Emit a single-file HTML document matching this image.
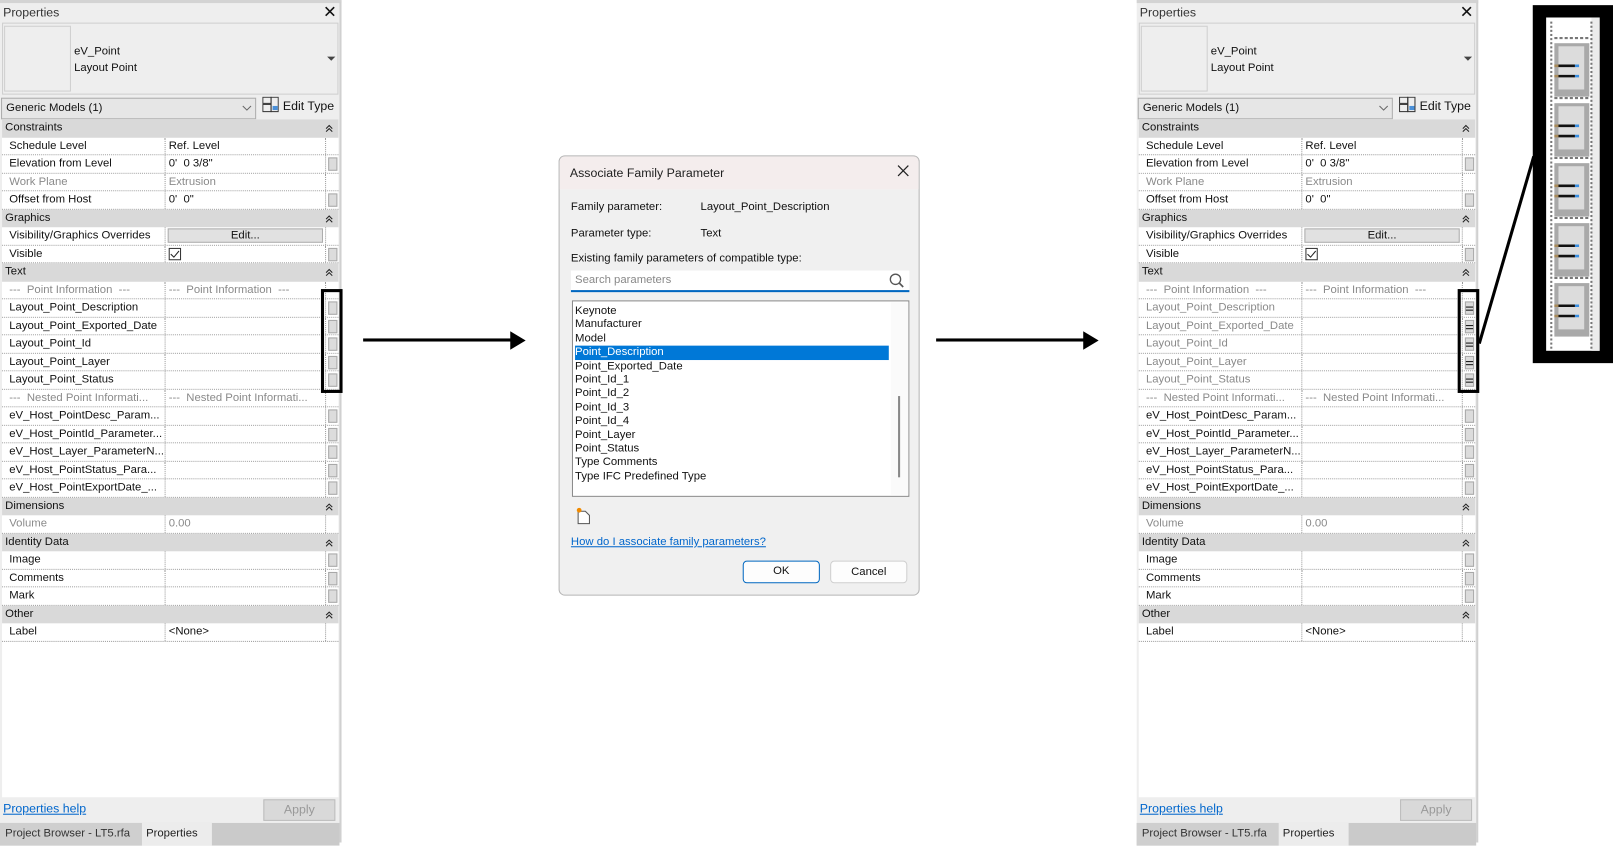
<!DOCTYPE html>
<html><head><meta charset="utf-8">
<style>
*{box-sizing:border-box}
body{margin:0;width:1613px;height:842px;overflow:hidden;background:#fff;font-family:"Liberation Sans",sans-serif;font-size:11px;color:#111}
#w{position:absolute;left:0;top:0;width:1568px;height:819px;transform:scale(1.0287);transform-origin:0 0}
.abs{position:absolute}
.panel{position:absolute;top:0;width:332px;height:819px;background:#eeeeee;border-top:3px solid #d3d3d3;border-right:2px solid #d0d0d0}
.tbl{position:absolute;left:2px;top:113px;width:327px;height:659px;background:#fff}
.r{height:17.5px;position:relative;border-bottom:1px dotted #9a9a9a;background:#fff;line-height:16px}
.n{position:absolute;left:7px;top:0;width:150px;overflow:hidden;white-space:nowrap}
.v{position:absolute;left:158px;top:0;bottom:0;width:156px;border-left:1px dotted #9a9a9a;padding-left:3px;white-space:nowrap;overflow:hidden}
.b{position:absolute;left:314px;top:0;bottom:0;width:13px;border-left:1px dotted #9a9a9a}
.b i{position:absolute;left:2px;top:2px;width:9px;height:13px;background:#dcdcdc;border:1px solid #a8a8a8}
.b i.e::before,.b i.e::after{content:"";position:absolute;left:0;width:7px;height:1px;background:#111}
.b i.e::before{top:4px}.b i.e::after{top:7px}
.h{height:17.5px;background:#d9d9d9;padding-left:3px;line-height:17px;position:relative}
.h svg{position:absolute;right:5px;top:5px}
.g{color:#8a8a8a}
</style></head><body><div id="w">

<!-- LEFT PANEL -->
<div class="panel" style="left:0">
 <div class="abs" style="left:3px;top:2px;color:#333;font-size:12px">Properties</div>
 <div class="abs" style="left:314px;top:-1px;font-size:16px">✕</div>
 <div class="abs" style="left:2px;top:19px;width:327px;height:70px;border:1px solid #cfcfcf;background:#eeeeee"></div>
 <div class="abs" style="left:4px;top:22px;width:65px;height:64px;border:1px solid #cfcfcf;background:#eeeeee"></div>
 <div class="abs" style="left:72px;top:39px;line-height:16px">eV_Point<br>Layout Point</div>
 <div class="abs" style="left:318px;top:52px;width:0;height:0;border-left:4px solid transparent;border-right:4px solid transparent;border-top:4px solid #444"></div>
 <div class="abs" style="left:1px;top:92px;width:248px;height:21px;border:1px solid #adadad;background:#e6e6e6;padding:3px 4px">Generic Models (1)</div>
 <svg class="abs" style="left:235px;top:99px" width="10" height="7"><path d="M1 1 L5 5 L9 1" stroke="#666" fill="none"/></svg>
 <svg class="abs" style="left:255px;top:91px" width="16" height="16"><rect x="0.5" y="0.5" width="8" height="6" fill="none" stroke="#333"/><rect x="0.5" y="7.5" width="8" height="7" fill="none" stroke="#333"/><rect x="8.5" y="0.5" width="7" height="14" fill="none" stroke="#333"/><rect x="10" y="9" width="5" height="4" fill="#4a90d9"/></svg>
 <div class="abs" style="left:275px;top:93px;font-size:12px">Edit Type</div>
 <div class="tbl">
  <div class="h">Constraints<svg width="8" height="8"><path d="M1 4L4 1L7 4M1 7L4 4L7 7" stroke="#222" fill="none"/></svg></div>
  <div class="r"><span class="n">Schedule Level</span><span class="v">Ref. Level</span><span class="b"></span></div>
  <div class="r"><span class="n">Elevation from Level</span><span class="v">0'&nbsp; 0 3/8"</span><span class="b"><i></i></span></div>
  <div class="r"><span class="n g">Work Plane</span><span class="v g">Extrusion</span><span class="b"></span></div>
  <div class="r"><span class="n">Offset from Host</span><span class="v">0'&nbsp; 0"</span><span class="b"><i></i></span></div>
  <div class="h">Graphics<svg width="8" height="8"><path d="M1 4L4 1L7 4M1 7L4 4L7 7" stroke="#222" fill="none"/></svg></div>
  <div class="r"><span class="n">Visibility/Graphics Overrides</span><span class="v" style="padding:1px 2px"><span style="display:block;height:14px;background:#e1e1e1;border:1px solid #adadad;text-align:center;line-height:12px">Edit...</span></span><span class="b"></span></div>
  <div class="r"><span class="n">Visible</span><span class="v"><span style="display:inline-block;width:12px;height:12px;border:1px solid #333;margin-top:2px;position:relative"><svg style="position:absolute;left:0;top:0" width="10" height="10"><path d="M1 5L4 8L9 2" stroke="#222" fill="none"/></svg></span></span><span class="b"><i></i></span></div>
  <div class="h">Text<svg width="8" height="8"><path d="M1 4L4 1L7 4M1 7L4 4L7 7" stroke="#222" fill="none"/></svg></div>
  <div class="r"><span class="n g">---&nbsp; Point Information&nbsp; ---</span><span class="v g">---&nbsp; Point Information&nbsp; ---</span><span class="b"></span></div>
  <div class="r"><span class="n">Layout_Point_Description</span><span class="v"></span><span class="b"><i></i></span></div>
  <div class="r"><span class="n">Layout_Point_Exported_Date</span><span class="v"></span><span class="b"><i></i></span></div>
  <div class="r"><span class="n">Layout_Point_Id</span><span class="v"></span><span class="b"><i></i></span></div>
  <div class="r"><span class="n">Layout_Point_Layer</span><span class="v"></span><span class="b"><i></i></span></div>
  <div class="r"><span class="n">Layout_Point_Status</span><span class="v"></span><span class="b"><i></i></span></div>
  <div class="r"><span class="n g">---&nbsp; Nested Point Informati...</span><span class="v g">---&nbsp; Nested Point Informati...</span><span class="b"></span></div>
  <div class="r"><span class="n">eV_Host_PointDesc_Param...</span><span class="v"></span><span class="b"><i></i></span></div>
  <div class="r"><span class="n">eV_Host_PointId_Parameter...</span><span class="v"></span><span class="b"><i></i></span></div>
  <div class="r"><span class="n">eV_Host_Layer_ParameterN...</span><span class="v"></span><span class="b"><i></i></span></div>
  <div class="r"><span class="n">eV_Host_PointStatus_Para...</span><span class="v"></span><span class="b"><i></i></span></div>
  <div class="r"><span class="n">eV_Host_PointExportDate_...</span><span class="v"></span><span class="b"><i></i></span></div>
  <div class="h">Dimensions<svg width="8" height="8"><path d="M1 4L4 1L7 4M1 7L4 4L7 7" stroke="#222" fill="none"/></svg></div>
  <div class="r"><span class="n g">Volume</span><span class="v g">0.00</span><span class="b"></span></div>
  <div class="h">Identity Data<svg width="8" height="8"><path d="M1 4L4 1L7 4M1 7L4 4L7 7" stroke="#222" fill="none"/></svg></div>
  <div class="r"><span class="n">Image</span><span class="v"></span><span class="b"><i></i></span></div>
  <div class="r"><span class="n">Comments</span><span class="v"></span><span class="b"><i></i></span></div>
  <div class="r"><span class="n">Mark</span><span class="v"></span><span class="b"><i></i></span></div>
  <div class="h">Other<svg width="8" height="8"><path d="M1 4L4 1L7 4M1 7L4 4L7 7" stroke="#222" fill="none"/></svg></div>
  <div class="r"><span class="n">Label</span><span class="v">&lt;None&gt;</span><span class="b"></span></div>
 </div>
 <div class="abs" style="left:3px;top:776px;color:#0066cc;text-decoration:underline;font-size:12px">Properties help</div>
 <div class="abs" style="left:256px;top:774px;width:70px;height:21px;background:#d9d9d9;border:1px solid #bcbcbc;color:#999;text-align:center;line-height:19px;font-size:12px">Apply</div>
 <div class="abs" style="left:0;top:797px;width:330px;height:22px;background:#cacaca"></div>
 <div class="abs" style="left:0;top:797px;width:138px;height:22px;background:#cfcfcf;padding:4px 5px;color:#333">Project Browser - LT5.rfa</div>
 <div class="abs" style="left:138px;top:797px;width:68px;height:22px;background:#ececec;padding:4px 4px;color:#222">Properties</div>
</div>
<div class="abs" style="left:312px;top:281px;width:21px;height:101px;border:3px solid #000"></div>

<!-- ARROWS -->
<div class="abs" style="left:353px;top:329px;width:146px;height:3px;background:#000"></div>
<div class="abs" style="left:496px;top:322px;width:0;height:0;border-top:9px solid transparent;border-bottom:9px solid transparent;border-left:15px solid #000"></div>
<div class="abs" style="left:910px;top:329px;width:146px;height:3px;background:#000"></div>
<div class="abs" style="left:1053px;top:322px;width:0;height:0;border-top:9px solid transparent;border-bottom:9px solid transparent;border-left:15px solid #000"></div>

<!-- DIALOG -->
<div class="abs" style="left:543px;top:151px;width:351px;height:428px;border:1px solid #b5b5b5;border-radius:6px;background:#f0f0f0;overflow:hidden">
 <div class="abs" style="left:0;top:0;width:351px;height:32px;background:#f4eded"></div>
 <div class="abs" style="left:10px;top:9px;font-size:12px;color:#222">Associate Family Parameter</div>
 <svg class="abs" style="left:328px;top:8px" width="12" height="12"><path d="M1 1L11 11M11 1L1 11" stroke="#222" stroke-width="1.2"/></svg>
 <div class="abs" style="left:11px;top:43px;font-size:11px">Family parameter:</div>
 <div class="abs" style="left:137px;top:43px;font-size:11px">Layout_Point_Description</div>
 <div class="abs" style="left:11px;top:69px;font-size:11px">Parameter type:</div>
 <div class="abs" style="left:137px;top:69px;font-size:11px">Text</div>
 <div class="abs" style="left:11px;top:93px;font-size:11px">Existing family parameters of compatible type:</div>
 <div class="abs" style="left:11px;top:111px;width:329px;height:21px;background:#fff;border-bottom:2px solid #0067c0;color:#888;padding:3px 4px;font-size:11px">Search parameters</div>
 <svg class="abs" style="left:320px;top:113px" width="16" height="16"><circle cx="6.5" cy="6.5" r="5" stroke="#555" fill="none" stroke-width="1.3"/><path d="M10 10L14 14" stroke="#555" stroke-width="1.6"/></svg>
 <div class="abs" style="left:12px;top:140px;width:328px;height:191px;background:#fff;border:1px solid #8a8a8a;font-size:11px;line-height:13.4px;padding:3px 2px">
  <div>Keynote</div><div>Manufacturer</div><div>Model</div>
  <div style="background:#0078d7;color:#fff;width:305px">Point_Description</div>
  <div>Point_Exported_Date</div><div>Point_Id_1</div><div>Point_Id_2</div><div>Point_Id_3</div><div>Point_Id_4</div><div>Point_Layer</div><div>Point_Status</div><div>Type Comments</div><div>Type IFC Predefined Type</div>
  <div class="abs" style="left:309px;top:1px;width:17px;height:187px;background:#fafafa"></div>
  <div class="abs" style="left:316px;top:92px;width:2px;height:79px;background:#888"></div>
 </div>
 <svg class="abs" style="left:15px;top:341px" width="16" height="18"><path d="M3 4H10L14 8V16H3Z" fill="#fff" stroke="#555"/><circle cx="4" cy="3" r="2.3" fill="#f08a00"/></svg>
 <div class="abs" style="left:11px;top:369px;color:#0066cc;text-decoration:underline;font-size:11px">How do I associate family parameters?</div>
 <div class="abs" style="left:178px;top:393px;width:75px;height:22px;border:1.5px solid #0067c0;border-radius:4px;background:#fdfdfd;text-align:center;line-height:19px;font-size:11px">OK</div>
 <div class="abs" style="left:263px;top:393px;width:75px;height:22px;border:1px solid #cfcfcf;border-radius:4px;background:#fdfdfd;text-align:center;line-height:20px;font-size:11px">Cancel</div>
</div>

<!-- RIGHT PANEL -->
<div class="panel" style="left:1105px">
 <div class="abs" style="left:3px;top:2px;color:#333;font-size:12px">Properties</div>
 <div class="abs" style="left:314px;top:-1px;font-size:16px">✕</div>
 <div class="abs" style="left:2px;top:19px;width:327px;height:70px;border:1px solid #cfcfcf;background:#eeeeee"></div>
 <div class="abs" style="left:4px;top:22px;width:65px;height:64px;border:1px solid #cfcfcf;background:#eeeeee"></div>
 <div class="abs" style="left:72px;top:39px;line-height:16px">eV_Point<br>Layout Point</div>
 <div class="abs" style="left:318px;top:52px;width:0;height:0;border-left:4px solid transparent;border-right:4px solid transparent;border-top:4px solid #444"></div>
 <div class="abs" style="left:1px;top:92px;width:248px;height:21px;border:1px solid #adadad;background:#e6e6e6;padding:3px 4px">Generic Models (1)</div>
 <svg class="abs" style="left:235px;top:99px" width="10" height="7"><path d="M1 1 L5 5 L9 1" stroke="#666" fill="none"/></svg>
 <svg class="abs" style="left:255px;top:91px" width="16" height="16"><rect x="0.5" y="0.5" width="8" height="6" fill="none" stroke="#333"/><rect x="0.5" y="7.5" width="8" height="7" fill="none" stroke="#333"/><rect x="8.5" y="0.5" width="7" height="14" fill="none" stroke="#333"/><rect x="10" y="9" width="5" height="4" fill="#4a90d9"/></svg>
 <div class="abs" style="left:275px;top:93px;font-size:12px">Edit Type</div>
 <div class="tbl">
  <div class="h">Constraints<svg width="8" height="8"><path d="M1 4L4 1L7 4M1 7L4 4L7 7" stroke="#222" fill="none"/></svg></div>
  <div class="r"><span class="n">Schedule Level</span><span class="v">Ref. Level</span><span class="b"></span></div>
  <div class="r"><span class="n">Elevation from Level</span><span class="v">0'&nbsp; 0 3/8"</span><span class="b"><i></i></span></div>
  <div class="r"><span class="n g">Work Plane</span><span class="v g">Extrusion</span><span class="b"></span></div>
  <div class="r"><span class="n">Offset from Host</span><span class="v">0'&nbsp; 0"</span><span class="b"><i></i></span></div>
  <div class="h">Graphics<svg width="8" height="8"><path d="M1 4L4 1L7 4M1 7L4 4L7 7" stroke="#222" fill="none"/></svg></div>
  <div class="r"><span class="n">Visibility/Graphics Overrides</span><span class="v" style="padding:1px 2px"><span style="display:block;height:14px;background:#e1e1e1;border:1px solid #adadad;text-align:center;line-height:12px">Edit...</span></span><span class="b"></span></div>
  <div class="r"><span class="n">Visible</span><span class="v"><span style="display:inline-block;width:12px;height:12px;border:1px solid #333;margin-top:2px;position:relative"><svg style="position:absolute;left:0;top:0" width="10" height="10"><path d="M1 5L4 8L9 2" stroke="#222" fill="none"/></svg></span></span><span class="b"><i></i></span></div>
  <div class="h">Text<svg width="8" height="8"><path d="M1 4L4 1L7 4M1 7L4 4L7 7" stroke="#222" fill="none"/></svg></div>
  <div class="r"><span class="n g">---&nbsp; Point Information&nbsp; ---</span><span class="v g">---&nbsp; Point Information&nbsp; ---</span><span class="b"></span></div>
  <div class="r"><span class="n g">Layout_Point_Description</span><span class="v"></span><span class="b"><i class="e"></i></span></div>
  <div class="r"><span class="n g">Layout_Point_Exported_Date</span><span class="v"></span><span class="b"><i class="e"></i></span></div>
  <div class="r"><span class="n g">Layout_Point_Id</span><span class="v"></span><span class="b"><i class="e"></i></span></div>
  <div class="r"><span class="n g">Layout_Point_Layer</span><span class="v"></span><span class="b"><i class="e"></i></span></div>
  <div class="r"><span class="n g">Layout_Point_Status</span><span class="v"></span><span class="b"><i class="e"></i></span></div>
  <div class="r"><span class="n g">---&nbsp; Nested Point Informati...</span><span class="v g">---&nbsp; Nested Point Informati...</span><span class="b"></span></div>
  <div class="r"><span class="n">eV_Host_PointDesc_Param...</span><span class="v"></span><span class="b"><i></i></span></div>
  <div class="r"><span class="n">eV_Host_PointId_Parameter...</span><span class="v"></span><span class="b"><i></i></span></div>
  <div class="r"><span class="n">eV_Host_Layer_ParameterN...</span><span class="v"></span><span class="b"><i></i></span></div>
  <div class="r"><span class="n">eV_Host_PointStatus_Para...</span><span class="v"></span><span class="b"><i></i></span></div>
  <div class="r"><span class="n">eV_Host_PointExportDate_...</span><span class="v"></span><span class="b"><i></i></span></div>
  <div class="h">Dimensions<svg width="8" height="8"><path d="M1 4L4 1L7 4M1 7L4 4L7 7" stroke="#222" fill="none"/></svg></div>
  <div class="r"><span class="n g">Volume</span><span class="v g">0.00</span><span class="b"></span></div>
  <div class="h">Identity Data<svg width="8" height="8"><path d="M1 4L4 1L7 4M1 7L4 4L7 7" stroke="#222" fill="none"/></svg></div>
  <div class="r"><span class="n">Image</span><span class="v"></span><span class="b"><i></i></span></div>
  <div class="r"><span class="n">Comments</span><span class="v"></span><span class="b"><i></i></span></div>
  <div class="r"><span class="n">Mark</span><span class="v"></span><span class="b"><i></i></span></div>
  <div class="h">Other<svg width="8" height="8"><path d="M1 4L4 1L7 4M1 7L4 4L7 7" stroke="#222" fill="none"/></svg></div>
  <div class="r"><span class="n">Label</span><span class="v">&lt;None&gt;</span><span class="b"></span></div>
 </div>
 <div class="abs" style="left:3px;top:776px;color:#0066cc;text-decoration:underline;font-size:12px">Properties help</div>
 <div class="abs" style="left:256px;top:774px;width:70px;height:21px;background:#d9d9d9;border:1px solid #bcbcbc;color:#999;text-align:center;line-height:19px;font-size:12px">Apply</div>
 <div class="abs" style="left:0;top:797px;width:330px;height:22px;background:#cacaca"></div>
 <div class="abs" style="left:0;top:797px;width:138px;height:22px;background:#cfcfcf;padding:4px 5px;color:#333">Project Browser - LT5.rfa</div>
 <div class="abs" style="left:138px;top:797px;width:68px;height:22px;background:#ececec;padding:4px 4px;color:#222">Properties</div>
</div>
<div class="abs" style="left:1417px;top:281px;width:21px;height:101px;border:3px solid #000"></div>

<!-- CONNECTOR + INSET -->
<svg class="abs" style="left:0;top:0" width="1568" height="819"><path d="M1438 334 L1491 152" stroke="#000" stroke-width="3"/></svg>
<div class="abs" style="left:1490px;top:5px;width:78px;height:348px;background:#000"></div>
<div class="abs" style="left:1503px;top:17px;width:52px;height:324px;background:#fff"></div>
<div class="abs" style="left:1547px;top:17px;width:8px;height:324px;background:#ececec"></div>
<div class="abs" style="left:1507px;top:21px;width:0;height:318px;border-left:2px dotted #777"></div>
<div class="abs" style="left:1546px;top:21px;width:0;height:318px;border-left:2px dotted #777"></div>
<svg class="abs" style="left:1508px;top:36px" width="40" height="300">
 <g id="bt"><path d="M3 1H36" stroke="#777" stroke-width="2" stroke-dasharray="3 2"/><rect x="3" y="6" width="34" height="52" fill="#a9a9a9"/><rect x="7" y="9" width="25" height="42" fill="#dcdcdc"/><path d="M3 28H7" stroke="#a88a5a" stroke-width="2.5"/><path d="M7 28H23" stroke="#111" stroke-width="2.5"/><path d="M23 28H27" stroke="#3c8fe0" stroke-width="2.5"/><path d="M3 38H7" stroke="#a88a5a" stroke-width="2.5"/><path d="M7 38H23" stroke="#111" stroke-width="2.5"/><path d="M23 38H27" stroke="#3c8fe0" stroke-width="2.5"/></g>
 <use href="#bt" y="58.3"/><use href="#bt" y="116.6"/><use href="#bt" y="174.9"/><use href="#bt" y="233.2"/>
</svg>

</div></body></html>
